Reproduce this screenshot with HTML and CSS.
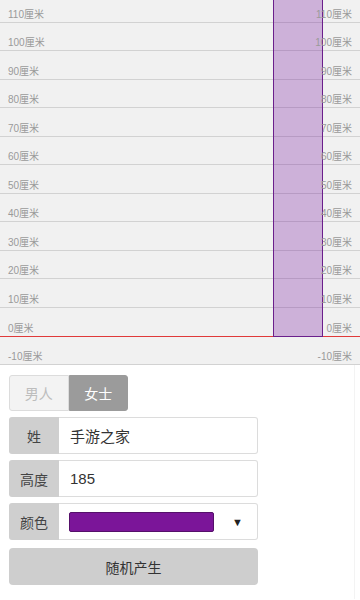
FILE: index.html
```html
<!DOCTYPE html>
<html lang="zh">
<head>
	<meta charset="UTF-8">
	<title>身高</title>
	<link rel="stylesheet" href="styles.css">
</head>
<body>
	<div class="chart">
		<div class="row first"><span>110厘米</span><span>110厘米</span></div>
		<div class="row"><span>100厘米</span><span>100厘米</span></div>
		<div class="row"><span>90厘米</span><span>90厘米</span></div>
		<div class="row"><span>80厘米</span><span>80厘米</span></div>
		<div class="row"><span>70厘米</span><span>70厘米</span></div>
		<div class="row"><span>60厘米</span><span>60厘米</span></div>
		<div class="row"><span>50厘米</span><span>50厘米</span></div>
		<div class="row"><span>40厘米</span><span>40厘米</span></div>
		<div class="row"><span>30厘米</span><span>30厘米</span></div>
		<div class="row"><span>20厘米</span><span>20厘米</span></div>
		<div class="row"><span>10厘米</span><span>10厘米</span></div>
		<div class="row zero"><span>0厘米</span><span>0厘米</span></div>
		<div class="row"><span>-10厘米</span><span>-10厘米</span></div>
		<div class="bar"></div>
	</div>
	<div class="form">
		<div class="sex">
			<span class="sex-btn">男人</span>
			<span class="sex-btn on">女士</span>
		</div>
		<div class="field">
			<span class="label">姓</span>
			<span class="value">手游之家</span>
		</div>
		<div class="field">
			<span class="label">高度</span>
			<span class="value">185</span>
		</div>
		<div class="field">
			<span class="label">颜色</span>
			<span class="value color">
				<span class="swatch"></span>
				<span class="arrow">▼</span>
			</span>
		</div>
		<div class="random">随机产生</div>
	</div>
</body>
</html>
```

FILE: styles.css
```css
body{margin: 0;background: #fff;font-family: "Liberation Sans", "Noto Sans CJK SC", sans-serif;color: #333;}

.chart{position: relative;height: 365px;background: #f1f1f1;overflow: hidden;}
.row{display: flex;justify-content: space-between;align-items: flex-end;box-sizing: border-box;height: 28.55px;padding: 0 8px 0 8px;border-bottom: 1px solid #d2d2d2;}
.row.first{height: 22.5px;}
.row.zero{border-bottom-color: #e03a3a;}
.row span{font-size: 10px;line-height: 12px;margin-bottom: 1px;color: #9a9a9a;position: relative;z-index: 1;}
.bar{position: absolute;left: 273px;top: -2px;width: 48px;height: 337px;background: rgba(123,31,162,0.3);border: 1px solid #6b1f8c;}

.form{width: 355px;box-sizing: border-box;border-right: 1px solid #f3f3f3;padding: 10px 9px 14px 9px;}
.sex{display: flex;width: 119px;height: 36px;margin-bottom: 6px;}
.sex-btn{flex: 1;display: flex;align-items: center;justify-content: center;font-size: 14px;}
.sex-btn{background: #f3f3f3;color: #bdbdbd;border: 1px solid #dcdcdc;border-radius: 3px 0 0 3px;}
.sex-btn.on{background: #9b9b9b;color: #fff;border-color: #9b9b9b;border-radius: 0 3px 3px 0;}

.field{display: flex;width: 249px;height: 37px;margin-bottom: 6px;}
.label{width: 50px;display: flex;align-items: center;justify-content: center;background: #cfcfcf;color: #444;font-size: 14px;border-radius: 3px 0 0 3px;}
.value{flex: 1;display: flex;align-items: center;padding-left: 11px;border: 1px solid #dcdcdc;border-left: none;border-radius: 0 3px 3px 0;font-size: 15px;color: #333;}
.color{padding-left: 10px;}
.swatch{width: 143px;height: 18px;background: #7b1599;border: 1px solid #55106a;border-radius: 2px;}
.arrow{margin-left: 18px;font-size: 11px;color: #222;}

.random{width: 249px;height: 37px;margin-top: 8px;display: flex;align-items: center;justify-content: center;background: #cecece;border-radius: 4px;font-size: 14px;color: #333;}
```
